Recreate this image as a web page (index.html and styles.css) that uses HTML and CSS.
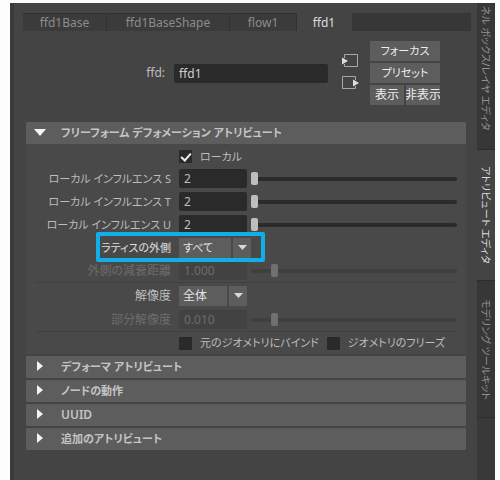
FILE: index.html
```html
<!DOCTYPE html>
<html lang="ja">
<head>
<meta charset="utf-8">
<title>ffd1</title>
<link rel="stylesheet" href="styles.css">
</head>
<body>
<div class="window">
  <main class="editor">
    <nav class="tabs">
      <button class="tab tab-base">ffd1Base</button>
      <button class="tab tab-shape">ffd1BaseShape</button>
      <button class="tab tab-flow">flow1</button>
      <button class="tab tab-active">ffd1</button>
    </nav>

    <header class="node">
      <label class="node-label" for="node-name">ffd:</label>
      <input class="node-name" id="node-name" type="text" value="ffd1">
      <div class="connections">
        <button class="icon-button" aria-label="入力">
          <svg width="18" height="16" viewBox="0 0 18 16"><path d="M2.500 4V0.500H15.500V12.500H2.500V10" fill="none" stroke="#a8a8a8"/><path d="M0 3.500L6 7L0 10.500Z" fill="#dedede"/></svg>
        </button>
        <button class="icon-button" aria-label="出力">
          <svg width="18" height="16" viewBox="0 0 18 16"><path d="M13.500 4V0.500H0.500V12.500H13.500V10" fill="none" stroke="#a8a8a8"/><path d="M11 3.500L17 7L11 10.500Z" fill="#dedede"/></svg>
        </button>
      </div>
      <div class="actions">
        <button class="action wide kana">フォーカス</button>
        <button class="action wide kana">プリセット</button>
        <button class="action">表示</button>
        <button class="action"><span>非表示</span></button>
      </div>
    </header>

    <div class="sections">
      <section>
        <button class="section-head kana"><svg class="arrow" width="14" height="12" viewBox="0 0 14 12"><path d="M1 2H13L7 9Z" fill="#f4f4f4"/></svg>フリーフォーム デフォメーション アトリビュート</button>
        <div class="attributes">
          <div class="row row-check">
            <input class="check" id="local" type="checkbox" checked><label class="kana" for="local">ローカル</label>
          </div>
          <div class="row">
            <label class="kana" for="s">ローカル インフルエンス S</label><input class="field" id="s" type="text" value="2"><input class="slider" type="range" aria-label="S" min="0" max="100" value="0">
          </div>
          <div class="row">
            <label class="kana" for="t">ローカル インフルエンス T</label><input class="field" id="t" type="text" value="2"><input class="slider" type="range" aria-label="T" min="0" max="100" value="0">
          </div>
          <div class="row">
            <label class="kana" for="u">ローカル インフルエンス U</label><input class="field" id="u" type="text" value="2"><input class="slider" type="range" aria-label="U" min="0" max="100" value="0">
          </div>
          <div class="row highlighted">
            <label class="kana" for="outside">ラティスの外側</label>
            <div class="combo combo-wide"><select class="kana" id="outside"><option>すべて</option></select><svg width="18" height="20" viewBox="0 0 18 20"><path d="M5 7H14L9.500 12Z" fill="#d8d8d8"/></svg></div>
          </div>
          <div class="row disabled">
            <label for="falloff">外側の減衰距離</label><input class="field" id="falloff" type="text" value="1.000" disabled><input class="slider" type="range" aria-label="外側の減衰距離" min="0" max="100" value="10" disabled>
          </div>
          <div class="row group">
            <label for="resolution">解像度</label>
            <div class="combo"><select id="resolution"><option>全体</option></select><svg width="18" height="20" viewBox="0 0 18 20"><path d="M5 7H14L9.500 12Z" fill="#d8d8d8"/></svg></div>
          </div>
          <div class="row disabled">
            <label for="partial">部分解像度</label><input class="field" id="partial" type="text" value="0.010" disabled><input class="slider" type="range" aria-label="部分解像度" min="0" max="100" value="10" disabled>
          </div>
          <div class="row row-check group">
            <input class="check" id="bind" type="checkbox"><label class="kana" for="bind">元のジオメトリにバインド</label>
            <input class="check" id="freeze" type="checkbox"><label class="kana" for="freeze">ジオメトリのフリーズ</label>
          </div>
        </div>
      </section>
      <button class="section-head kana"><svg class="arrow" width="14" height="12" viewBox="0 0 14 12"><path d="M4 0L10 5L4 10Z" fill="#f4f4f4"/></svg>デフォーマ アトリビュート</button>
      <button class="section-head kana"><svg class="arrow" width="14" height="12" viewBox="0 0 14 12"><path d="M4 0L10 5L4 10Z" fill="#f4f4f4"/></svg>ノードの動作</button>
      <button class="section-head"><svg class="arrow" width="14" height="12" viewBox="0 0 14 12"><path d="M4 0L10 5L4 10Z" fill="#f4f4f4"/></svg>UUID</button>
      <button class="section-head kana"><svg class="arrow" width="14" height="12" viewBox="0 0 14 12"><path d="M4 0L10 5L4 10Z" fill="#f4f4f4"/></svg>追加のアトリビュート</button>
    </div>
  </main>

  <nav class="side">
    <button class="side-tab side-channel">ネル ボックス/レイヤ エディタ</button>
    <button class="side-tab side-active">アトリビュート エディタ</button>
    <button class="side-tab side-modeling">モデリング ツールキット</button>
  </nav>
</div>
</body>
</html>
```
FILE: styles.css
```css
*, *::before, *::after { box-sizing: border-box; }

body {
  margin: 0;
  background: #fdfdfd;
  color: #bdbdbd;
  font: 12px/16px "Noto Sans", "Noto Sans CJK JP", sans-serif;
  font-feature-settings: "palt";
}

button, input, select {
  margin: 0;
  padding: 0;
  border: 0;
  border-radius: 0;
  background: none;
  color: inherit;
  font: inherit;
  font-feature-settings: inherit;
  appearance: none;
}

svg { display: block; flex: none; }

.kana { font-size: 11px; }

.window {
  display: flex;
  min-height: calc(100vh - 3px);
  margin: 3px 5px 0 10px;
  background: #444;
}

.editor {
  flex: 1;
  min-width: 0;
  padding: 10px 6px 0 9px;
  border-left: 4px solid #3b3b3b;
}

.tabs {
  display: flex;
  height: 18px;
  background: #373737;
}

.tab {
  border-top: 1px solid #323232;
  border-right: 1px solid #303030;
  background: #3b3b3b;
  color: #8c8c8c;
  line-height: 18px;
}
.tab-base { width: 84px; }
.tab-shape { width: 123px; }
.tab-flow { width: 67px; }
.tab-active { width: 55px; border-color: #444; background: #444; color: #dcdcdc; }

.node {
  display: flex;
  align-items: center;
  height: 84px;
  padding: 0 31px 0 16px;
}
.node-label { flex: 1; padding-right: 9px; text-align: right; }
.node-name {
  width: 154px;
  height: 19px;
  padding: 0 5px;
  border-radius: 2px;
  background: #2a2a2a;
  color: #d0d0d0;
}
.connections { display: grid; gap: 6px; margin: 0 10px 0 14px; }
.icon-button { width: 18px; height: 16px; }
.actions { display: grid; grid-template-columns: 34px 34px; gap: 2px; }
.action {
  display: flex;
  align-items: center;
  justify-content: center;
  height: 20px;
  overflow: hidden;
  background: #5d5d5d;
  color: #eee;
  white-space: nowrap;
}
.wide { grid-column: span 2; }

.sections {
  display: grid;
  grid-template-columns: minmax(0, 1fr);
  gap: 2px;
  padding: 7px 5px 0 3px;
}
.section-head {
  display: flex;
  align-items: center;
  gap: 14px;
  width: 100%;
  height: 22px;
  padding-left: 7px;
  border-radius: 1px;
  background: #5d5d5d;
  color: #c4c4c4;
  font-weight: 600;
}

.attributes {
  padding: 2px 9px 0;
  background: #494949;
}
.row {
  display: grid;
  grid-template-columns: 136px 68px 1fr;
  column-gap: 8px;
  align-items: center;
  height: 23px;
  position: relative;
}
.row > label { text-align: right; white-space: nowrap; }
.row-check {
  display: flex;
  gap: 8px;
  height: 21px;
  padding-left: 144px;
}
.group { height: 26px; border-top: 1px solid #404040; }
.row-check.group { height: 23px; }
.disabled { color: #6c6c6c; }

.field {
  width: 68px;
  height: 19px;
  padding: 0 5px;
  border-radius: 2px;
  background: #2a2a2a;
}
.field:disabled { background: #424242; }

.check {
  display: grid;
  place-items: center;
  width: 13px;
  height: 13px;
  background: #2a2a2a;
}
.check:checked::before {
  content: "";
  width: 6px;
  height: 10px;
  margin-bottom: 2px;
  border: solid #eee;
  border-width: 0 2px 2px 0;
  transform: rotate(42deg);
}

.slider { width: calc(100% + 4px); height: 14px; margin-left: -4px; }
.slider::-webkit-slider-runnable-track { height: 4px; border-radius: 2px; background: #2b2b2b; }
.slider::-webkit-slider-thumb {
  appearance: none;
  width: 7px;
  height: 13px;
  margin-top: -5px;
  border-radius: 2px;
  background: #bebebe;
}
.slider:disabled::-webkit-slider-runnable-track { background: #3f3f3f; }
.slider:disabled::-webkit-slider-thumb { background: #707070; }

.combo {
  display: flex;
  gap: 2px;
  width: 68px;
  height: 20px;
}
.combo-wide { width: 72px; }
.combo select {
  flex: 1;
  min-width: 0;
  padding-left: 4px;
  background: #5d5d5d;
  color: #e4e4e4;
}
.combo svg { background: #5d5d5d; pointer-events: none; }

.highlighted { color: #e0e0e0; }
.highlighted::after {
  content: "";
  position: absolute;
  top: -4px;
  bottom: -3px;
  left: 61px;
  width: 169px;
  z-index: 1;
  border: 4px solid #12aeea;
  border-radius: 2px;
  pointer-events: none;
}

.side {
  display: flex;
  flex-direction: column;
  width: 18px;
  background: #393939;
}
.side-tab {
  writing-mode: vertical-rl;
  text-orientation: sideways;
  width: 18px;
  border-bottom: 1px solid #2c2c2c;
  background: #373737;
  color: #929292;
  font-size: 10px;
  line-height: 18px;
  white-space: nowrap;
}
.side-channel { height: 147px; padding-bottom: 16px; }
.side-active { height: 131px; background: #444; color: #dedede; }
.side-modeling { height: 137px; }
```
